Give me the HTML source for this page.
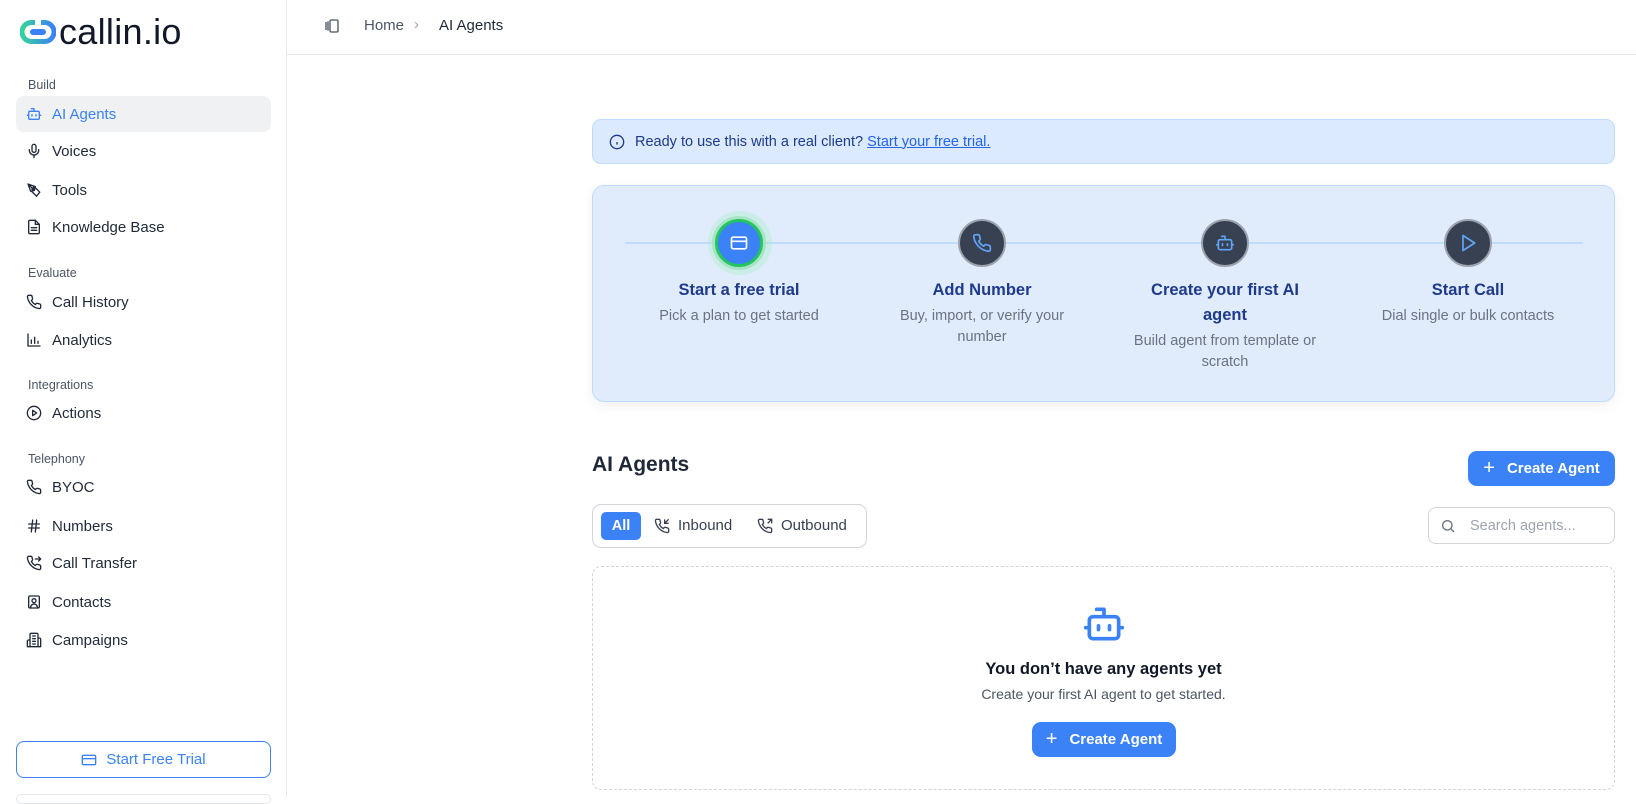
<!DOCTYPE html>
<html><head><meta charset="utf-8"><style>
*{box-sizing:border-box;margin:0;padding:0}
body{width:1636px;height:797px;overflow:hidden;background:#fff;font-family:"Liberation Sans",sans-serif;color:#1f2937;position:relative}
.abs{position:absolute}
.sb{position:absolute;left:0;top:0;width:287px;height:797px;border-right:1px solid #e5e7eb;background:#fff}
.sec{position:absolute;left:28px;font-size:12.5px;color:#4b5563}
.it{position:absolute;left:16px;width:255px;height:36px;display:flex;align-items:center;padding-left:10px;font-size:15px;color:#1f2937;border-radius:8px}
.it svg{width:16px;height:16px;margin-right:10px;fill:none;stroke:#1f2937;stroke-width:2;stroke-linecap:round;stroke-linejoin:round}
.it.act{background:#eff1f3;color:#3b82f6}
.it.act svg{stroke:#3b82f6}
.step{position:absolute;width:260px;text-align:center;transform:translateX(-50%)}
.step h4{font-size:16.5px;color:#1e3a8a;font-weight:bold;margin-top:0;line-height:25px}
.step p{font-size:14.5px;color:#6b7280;line-height:21px;margin-top:3px}
.circ{position:absolute;width:48px;height:48px;border-radius:50%;background:#374151;border:2px solid #9ca3af;transform:translate(-50%,-50%);display:flex;align-items:center;justify-content:center}
.circ svg{width:20px;height:20px;fill:none;stroke:#60a5fa;stroke-width:2;stroke-linecap:round;stroke-linejoin:round}
.btn{position:absolute;background:#3b82f6;color:#fff;border-radius:9px;display:flex;align-items:center;justify-content:center;font-size:15px;font-weight:bold}
</style></head><body>
<div class="sb">
 <div class="abs" style="left:20px;top:13px;display:flex;align-items:center">
  <svg width="36" height="26" viewBox="0 0 36 26"><defs><linearGradient id="g" x1="0" x2="1"><stop offset="0" stop-color="#34d399"/><stop offset="1" stop-color="#3b82f6"/></linearGradient></defs><path d="M15 3.5H11.5A9.5 9.5 0 0 0 11.5 22.5H24.5A9.5 9.5 0 0 0 24.5 3.5H21" fill="none" stroke="url(#g)" stroke-width="5"/><rect x="10" y="10" width="16" height="6" rx="3" fill="#3b82f6"/></svg>
  <span style="font-size:36px;color:#111827;margin-left:3px;letter-spacing:0.3px;line-height:38px">callin.io</span>
 </div>
 <div class="sec" style="top:78px">Build</div>
 <div class="it act" style="top:96px"><svg viewBox="0 0 24 24"><rect x="4" y="8" width="16" height="12" rx="2"/><path d="M12 8V4H8M2 14h2M20 14h2M9 13v2M15 13v2"/></svg>AI Agents</div>
 <div class="it" style="top:133px"><svg viewBox="0 0 24 24"><rect x="9" y="2" width="6" height="12" rx="3"/><path d="M19 10v1a7 7 0 0 1-14 0v-1M12 18v4"/></svg>Voices</div>
 <div class="it" style="top:172px"><svg viewBox="0 0 24 24"><path d="M15.7 21.3l-7-7 3-8 9 9zM3 3l9 9M3 3l11 4M3 3l4 11"/><circle cx="11" cy="11" r="2"/></svg>Tools</div>
 <div class="it" style="top:209px"><svg viewBox="0 0 24 24"><path d="M14 2H6a2 2 0 0 0-2 2v16a2 2 0 0 0 2 2h12a2 2 0 0 0 2-2V8z"/><path d="M14 2v6h6M8 13h8M8 17h8"/></svg>Knowledge Base</div>
 <div class="sec" style="top:266px">Evaluate</div>
 <div class="it" style="top:284px"><svg viewBox="0 0 24 24"><path d="M22 16.9v3a2 2 0 0 1-2.2 2 19.8 19.8 0 0 1-8.6-3.1 19.5 19.5 0 0 1-6-6A19.8 19.8 0 0 1 2.1 4.2 2 2 0 0 1 4.1 2h3a2 2 0 0 1 2 1.7c.1 1 .4 1.9.7 2.8a2 2 0 0 1-.5 2.1L8 9.8a16 16 0 0 0 6 6l1.3-1.3a2 2 0 0 1 2.1-.4c.9.3 1.8.6 2.8.7a2 2 0 0 1 1.7 2z"/></svg>Call History</div>
 <div class="it" style="top:322px"><svg viewBox="0 0 24 24"><path d="M3 3v18h18M8 17v-5M13 17V8M18 17v-3"/></svg>Analytics</div>
 <div class="sec" style="top:378px">Integrations</div>
 <div class="it" style="top:395px"><svg viewBox="0 0 24 24"><circle cx="12" cy="12" r="10"/><path d="M10 8l6 4-6 4z"/></svg>Actions</div>
 <div class="sec" style="top:452px">Telephony</div>
 <div class="it" style="top:469px"><svg viewBox="0 0 24 24"><path d="M22 16.9v3a2 2 0 0 1-2.2 2 19.8 19.8 0 0 1-8.6-3.1 19.5 19.5 0 0 1-6-6A19.8 19.8 0 0 1 2.1 4.2 2 2 0 0 1 4.1 2h3a2 2 0 0 1 2 1.7c.1 1 .4 1.9.7 2.8a2 2 0 0 1-.5 2.1L8 9.8a16 16 0 0 0 6 6l1.3-1.3a2 2 0 0 1 2.1-.4c.9.3 1.8.6 2.8.7a2 2 0 0 1 1.7 2z"/></svg>BYOC</div>
 <div class="it" style="top:508px"><svg viewBox="0 0 24 24"><path d="M4 9h16M4 15h16M10 3L8 21M16 3l-2 18"/></svg>Numbers</div>
 <div class="it" style="top:545px"><svg viewBox="0 0 24 24"><path d="M22 16.9v3a2 2 0 0 1-2.2 2 19.8 19.8 0 0 1-8.6-3.1 19.5 19.5 0 0 1-6-6A19.8 19.8 0 0 1 2.1 4.2 2 2 0 0 1 4.1 2h3a2 2 0 0 1 2 1.7c.1 1 .4 1.9.7 2.8a2 2 0 0 1-.5 2.1L8 9.8a16 16 0 0 0 6 6l1.3-1.3a2 2 0 0 1 2.1-.4c.9.3 1.8.6 2.8.7a2 2 0 0 1 1.7 2z"/><path d="M14 6h8M19 3l3 3-3 3"/></svg>Call Transfer</div>
 <div class="it" style="top:584px"><svg viewBox="0 0 24 24"><rect x="4" y="3" width="16" height="18" rx="2"/><circle cx="12" cy="10" r="3"/><path d="M7 21v-1a5 5 0 0 1 10 0v1"/></svg>Contacts</div>
 <div class="it" style="top:622px"><svg viewBox="0 0 24 24"><path d="M6 22V4a2 2 0 0 1 2-2h8a2 2 0 0 1 2 2v18zM6 12H4a2 2 0 0 0-2 2v8h4M18 9h2a2 2 0 0 1 2 2v11h-4M10 6h4M10 10h4M10 14h4M10 18h4"/></svg>Campaigns</div>
 <div class="abs" style="left:16px;top:741px;width:255px;height:37px;border:1px solid #3b82f6;border-radius:8px;display:flex;align-items:center;justify-content:center;color:#3b82f6;font-size:15px">
  <svg width="16" height="16" viewBox="0 0 24 24" fill="none" stroke="#3b82f6" stroke-width="2" style="margin-right:9px"><rect x="2" y="5" width="20" height="14" rx="2"/><path d="M2 10h20"/></svg>Start Free Trial</div>
 <div class="abs" style="left:16px;top:794px;width:255px;height:10px;border:1px solid #e5e7eb;border-radius:8px"></div>
</div>
<div class="abs" style="left:287px;top:0;width:1349px;height:55px;border-bottom:1px solid #e5e7eb"></div>
<svg class="abs" style="left:324px;top:18px" width="16" height="16" viewBox="0 0 24 24" fill="none" stroke="#4b5563" stroke-width="2"><rect x="9" y="3" width="12" height="18" rx="2"/><path d="M3 6v12M6 5v14"/></svg>
<div class="abs" style="left:364px;top:17px;font-size:15px;color:#4b5563">Home</div>
<div class="abs" style="left:414px;top:16px;font-size:15px;color:#9ca3af">›</div>
<div class="abs" style="left:439px;top:17px;font-size:15px;color:#1f2937">AI Agents</div>

<div class="abs" style="left:592px;top:119px;width:1023px;height:45px;background:#dbeafe;border:1px solid #bfdbfe;border-radius:9px;display:flex;align-items:center;padding-left:16px;font-size:14.5px;color:#1e3a8a">
 <svg width="16" height="16" viewBox="0 0 24 24" fill="none" stroke="#1e3a8a" stroke-width="2" style="margin-right:10px"><circle cx="12" cy="12" r="10"/><path d="M12 16v-4M12 8h.01"/></svg>
 Ready to use this with a real client?&nbsp;<span style="color:#2563eb;text-decoration:underline">Start your free trial.</span></div>

<div class="abs" style="left:592px;top:185px;width:1023px;height:217px;background:#e0ecfc;border:1px solid #bfdbfe;border-radius:12px;box-shadow:0 4px 12px rgba(0,0,0,.06)"></div>
<div class="abs" style="left:625px;top:242px;width:958px;height:2px;background:#bfdbfe"></div>
<div class="abs" style="left:708px;top:211px;width:64px;height:64px;border-radius:50%;background:rgba(134,239,172,.25)"></div>
<div class="circ" style="left:739px;top:243px;background:#3b82f6;border:3px solid #22c55e;box-shadow:0 0 0 3px #a7e3c4"><svg viewBox="0 0 24 24" style="stroke:#fff"><rect x="3" y="5" width="18" height="14" rx="2"/><path d="M3 10h18"/></svg></div>
<div class="circ" style="left:982px;top:243px"><svg viewBox="0 0 24 24"><path d="M22 16.9v3a2 2 0 0 1-2.2 2 19.8 19.8 0 0 1-8.6-3.1 19.5 19.5 0 0 1-6-6A19.8 19.8 0 0 1 2.1 4.2 2 2 0 0 1 4.1 2h3a2 2 0 0 1 2 1.7c.1 1 .4 1.9.7 2.8a2 2 0 0 1-.5 2.1L8 9.8a16 16 0 0 0 6 6l1.3-1.3a2 2 0 0 1 2.1-.4c.9.3 1.8.6 2.8.7a2 2 0 0 1 1.7 2z"/></svg></div>
<div class="circ" style="left:1225px;top:243px"><svg viewBox="0 0 24 24"><rect x="4" y="8" width="16" height="12" rx="2"/><path d="M12 8V4H8M2 14h2M20 14h2M9 13v2M15 13v2"/></svg></div>
<div class="circ" style="left:1468px;top:243px"><svg viewBox="0 0 24 24"><path d="M6 3l14 9-14 9z"/></svg></div>
<div class="step" style="left:739px;top:278px"><h4>Start a free trial</h4><p>Pick a plan to get started</p></div>
<div class="step" style="left:982px;top:278px"><h4>Add Number</h4><p>Buy, import, or verify your<br>number</p></div>
<div class="step" style="left:1225px;top:278px"><h4>Create your first AI<br>agent</h4><p>Build agent from template or<br>scratch</p></div>
<div class="step" style="left:1468px;top:278px"><h4>Start Call</h4><p>Dial single or bulk contacts</p></div>

<div class="abs" style="left:592px;top:453px;font-size:21px;font-weight:bold;color:#1f2937">AI Agents</div>
<div class="btn" style="left:1468px;top:451px;width:147px;height:35px"><span style="font-size:20px;font-weight:normal;margin-right:12px">+</span>Create Agent</div>

<div class="abs" style="left:592px;top:504px;width:275px;height:44px;border:1px solid #d1d5db;border-radius:9px"></div>
<div class="btn" style="left:601px;top:512px;width:40px;height:28px;border-radius:5px;font-size:14.5px">All</div>
<svg class="abs" style="left:654px;top:518px" width="16" height="16" viewBox="0 0 24 24" fill="none" stroke="#374151" stroke-width="2"><path d="M22 16.9v3a2 2 0 0 1-2.2 2 19.8 19.8 0 0 1-8.6-3.1 19.5 19.5 0 0 1-6-6A19.8 19.8 0 0 1 2.1 4.2 2 2 0 0 1 4.1 2h3a2 2 0 0 1 2 1.7c.1 1 .4 1.9.7 2.8a2 2 0 0 1-.5 2.1L8 9.8a16 16 0 0 0 6 6l1.3-1.3a2 2 0 0 1 2.1-.4c.9.3 1.8.6 2.8.7a2 2 0 0 1 1.7 2z"/><path d="M16 2v6h6M22 2l-6 6"/></svg>
<div class="abs" style="left:678px;top:517px;font-size:15px;color:#374151">Inbound</div>
<svg class="abs" style="left:757px;top:518px" width="16" height="16" viewBox="0 0 24 24" fill="none" stroke="#374151" stroke-width="2"><path d="M22 16.9v3a2 2 0 0 1-2.2 2 19.8 19.8 0 0 1-8.6-3.1 19.5 19.5 0 0 1-6-6A19.8 19.8 0 0 1 2.1 4.2 2 2 0 0 1 4.1 2h3a2 2 0 0 1 2 1.7c.1 1 .4 1.9.7 2.8a2 2 0 0 1-.5 2.1L8 9.8a16 16 0 0 0 6 6l1.3-1.3a2 2 0 0 1 2.1-.4c.9.3 1.8.6 2.8.7a2 2 0 0 1 1.7 2z"/><path d="M16 2h6v6M16 8l6-6"/></svg>
<div class="abs" style="left:781px;top:517px;font-size:15px;color:#374151">Outbound</div>

<div class="abs" style="left:1428px;top:507px;width:187px;height:37px;border:1px solid #d1d5db;border-radius:8px;display:flex;align-items:center;padding-left:11px;color:#9ca3af;font-size:14.5px">
 <svg width="16" height="16" viewBox="0 0 24 24" fill="none" stroke="#6b7280" stroke-width="2" style="margin-right:14px"><circle cx="11" cy="11" r="7"/><path d="M21 21l-5-5"/></svg>Search agents...</div>

<div class="abs" style="left:592px;top:566px;width:1023px;height:224px;border:1px dashed #d1d5db;border-radius:9px"></div>
<svg class="abs" style="left:1082px;top:602px" width="44" height="44" viewBox="0 0 24 24" fill="none" stroke="#3b82f6" stroke-width="2" stroke-linecap="round" stroke-linejoin="round"><rect x="4" y="8" width="16" height="12" rx="2"/><path d="M12 8V4H8M2 14h2M20 14h2M9 13v2M15 13v2"/></svg>
<div class="abs" style="left:592px;top:660px;width:1023px;text-align:center;font-size:16.5px;font-weight:bold;color:#111827">You don’t have any agents yet</div>
<div class="abs" style="left:592px;top:686px;width:1023px;text-align:center;font-size:14px;color:#4b5563">Create your first AI agent to get started.</div>
<div class="btn" style="left:1032px;top:722px;width:144px;height:35px"><span style="font-size:20px;font-weight:normal;margin-right:12px">+</span>Create Agent</div>
</body></html>
